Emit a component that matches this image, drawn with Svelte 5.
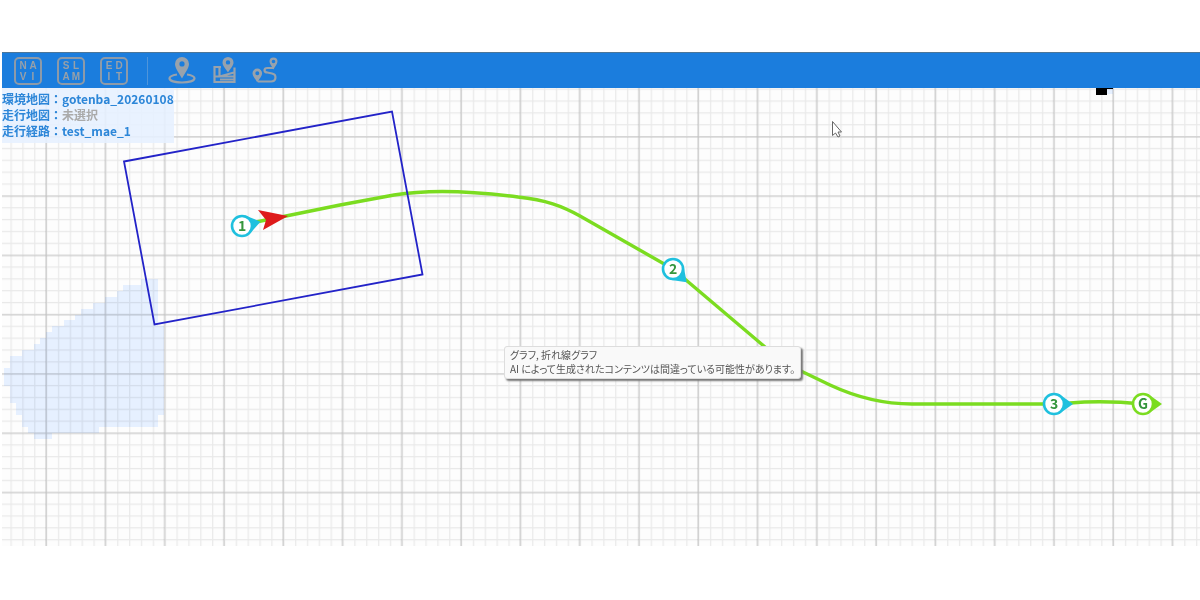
<script lang="ts">
	type Mode = { label: string; letters: string[] };
	type Waypoint = { name: string; x: number; y: number; angle: number; goal?: boolean };

	const modes: Mode[] = [
		{ label: 'NAVI', letters: ['N', 'A', 'V', 'I'] },
		{ label: 'SLAM', letters: ['S', 'L', 'A', 'M'] },
		{ label: 'EDIT', letters: ['E', 'D', 'I', 'T'] }
	];

	const info = [
		{ key: '環境地図', value: 'gotenba_20260108' },
		{ key: '走行地図', value: '' },
		{ key: '走行経路', value: 'test_mae_1' }
	];

	const waypoints: Waypoint[] = [
		{ name: '1', x: 240, y: 138, angle: -13 },
		{ name: '2', x: 671, y: 181, angle: 44 },
		{ name: '3', x: 1052, y: 316, angle: 0 },
		{ name: 'G', x: 1141, y: 316, angle: 0, goal: true }
	];

	// occupancy cells: [first column, end column] for each row
	const cell = 5.928;
	const area = [
		[23, 26], [20, 26], [19, 26], [17, 26], [15, 26], [13, 26], [12, 26], [10, 26], [8, 27],
		[7, 27], [6, 27], [5, 27], [3, 27], [1, 27], [1, 27], [0, 27], [0, 27], [0, 27],
		[1, 27], [1, 27], [1, 27], [2, 27], [2, 27], [3, 26], [3, 26], [4, 16], [5, 8]
	];

	const minor = cell * 2;
	const major = cell * 10;

	let mode = $state('');
</script>

<main>
	<header>
		{#each modes as m (m.label)}
			<button class="mode" aria-label={m.label} aria-pressed={mode === m.label} onclick={() => (mode = m.label)}>
				<svg width="28" height="28" viewBox="0 0 28 28">
					<rect x="1" y="1" width="26" height="26" rx="4" />
					<text x="9" y="12">{m.letters[0]}</text>
					<text x="19" y="12">{m.letters[1]}</text>
					<text x="9" y="23">{m.letters[2]}</text>
					<text x="19" y="23">{m.letters[3]}</text>
				</svg>
			</button>
		{/each}
		<span class="divider"></span>
		<button class="tool" aria-label="Set position">
			<svg width="28" height="28" viewBox="0 0 28 28">
				<path class="line" d="M9 17.500C4.500 18.200 1.500 19.300 1.500 21.300 1.500 24 7 25.500 14 25.500S26.500 24 26.500 21.300C26.500 19.300 23.500 18.200 19 17.500" />
				<path class="fill" fill-rule="evenodd" d="M14 0a7 7 0 0 1 7 7c0 4-4 9-7 14.500C11 16 7 11 7 7a7 7 0 0 1 7-7zm0 4.300a2.600 2.600 0 1 0 0 5.200 2.600 2.600 0 0 0 0-5.200z" />
			</svg>
		</button>
		<button class="tool" aria-label="Map">
			<svg width="28" height="28" viewBox="0 0 28 28">
				<path class="line" d="M11 10H4.500V25H24.500V10.500M9.500 10V19.500M4.500 19.500H24.500M9.500 19.500L24 15.500M10 22.500H24" />
				<path class="fill" fill-rule="evenodd" d="M18 0a5.500 5.500 0 0 1 5.500 5.500c0 3.500-3.500 6.500-5.500 10-2-3.500-5.500-6.500-5.500-10A5.500 5.500 0 0 1 18 0zm0 3.200a2.200 2.200 0 1 0 0 4.400 2.200 2.200 0 0 0 0-4.400z" />
			</svg>
		</button>
		<button class="tool" aria-label="Route">
			<svg width="28" height="28" viewBox="0 0 28 28">
				<path class="line" d="M22 11H15.500C11.500 11 11.500 15.500 15.500 15.500L20 16.500C25 17.500 24.500 24.500 19 24.500H6" />
				<path class="fill" fill-rule="evenodd" d="M5.300 11.500a4.800 4.800 0 0 1 4.800 4.800c0 3-3 5.700-4.800 9.200-1.800-3.500-4.800-6.200-4.800-9.200a4.800 4.800 0 0 1 4.800-4.800zm0 2.800a2 2 0 1 0 0 4 2 2 0 0 0 0-4z" />
				<path class="fill" fill-rule="evenodd" d="M21.500 0.500a4 4 0 0 1 4 4c0 2.500-2.500 4.500-4 8-1.500-3.500-4-5.500-4-8a4 4 0 0 1 4-4zm0 2.200a1.800 1.800 0 1 0 0 3.600 1.800 1.800 0 0 0 0-3.600z" />
			</svg>
		</button>
	</header>

	<section class="map" aria-label="Map view">
		<svg class="canvas" width="100%" height="100%">
			<defs>
				<pattern id="minor" x="44" y="48" width={minor} height={minor} patternUnits="userSpaceOnUse">
					<path d="M0.700 0V{minor}M0 0.700H{minor}" stroke="#ebebeb" stroke-width="1.200" />
				</pattern>
				<pattern id="major" x="43" y="48" width={major} height={major} patternUnits="userSpaceOnUse">
					<path d="M1 0V{major}M0 1H{major}" stroke="#8c8c8c" stroke-opacity=".42" stroke-width="1.200" />
				</pattern>
			</defs>

			<g fill="#e6f0ff" shape-rendering="crispEdges">
				{#each area as [from, to], row (row)}
					<rect x={2.3 + from * cell} y={191 + row * cell} width={(to - from) * cell} height={cell} />
				{/each}
				<rect x="1105" y="0" width="6" height="6" />
			</g>
			<g class="blend">
				<rect width="100%" height="100%" fill="url(#minor)" />
				<rect width="100%" height="100%" fill="url(#major)" />
			</g>
			<path d="M1094 0H1111V1H1105V7H1094z" fill="#000" />

			<path
				class="route"
				d="M254 134L284 128 338 117 392 107Q440 99 516 109C544 112 560 118 578 128L671 181 763 259C780 273 790 279 801 284L828 297C858 311 886 316 910 316H1052L1068 315Q1101 312 1141 316"
			/>
			<path class="footprint" d="M122 73.500L390 23.500 420.500 186.500 152.500 236.500z" />

			{#each waypoints as p (p.name)}
				<g class="waypoint" class:goal={p.goal} transform="translate({p.x} {p.y})">
					<path d="M5 -10L19 0 5 10z" transform="rotate({p.angle})" />
					<circle r="10" />
					<text y="5">{p.name}</text>
				</g>
			{/each}
			<path d="M256 122L286 128 261 142 264 132z" fill="#de1b1b" />

			<path class="cursor" d="M830.500 33.500V47.500L833.500 45 836 49 838 48 836 44H839.500z" />
		</svg>

		<dl class="info">
			{#each info as row (row.key)}
				<div>
					<dt>{row.key}：</dt>
					<dd class:empty={!row.value}>{row.value || '未選択'}</dd>
				</div>
			{/each}
		</dl>

		<div class="tooltip" role="tooltip">
			<div>グラフ, 折れ線グラフ</div>
			<div>AI によって生成されたコンテンツは間違っている可能性があります。</div>
		</div>
	</section>
</main>

<style>
	:global(body) {
		margin: 0;
		background: #fff;
	}
	main {
		padding: 52px 0 0 2px;
		font-family: 'Noto Sans CJK JP', sans-serif;
	}
	header {
		display: flex;
		align-items: center;
		box-sizing: border-box;
		height: 36px;
		padding: 0 12px;
		background: #1b7ddd;
		border-top: 1px solid #4c7699;
	}
	button {
		display: block;
		padding: 0;
		border: 0;
		background: none;
		cursor: pointer;
	}
	button svg {
		display: block;
	}
	.mode {
		margin-right: 15px;
	}
	.mode rect {
		fill: none;
		stroke: #8d9aa8;
		stroke-width: 2;
	}
	.mode text {
		fill: #97a0a9;
		font: bold 10px 'Liberation Sans', sans-serif;
		text-anchor: middle;
	}
	.divider {
		width: 1px;
		height: 28px;
		margin: 0 20px 0 4px;
		background: #4f95da;
	}
	.tool {
		margin-right: 14px;
	}
	.line {
		fill: none;
		stroke: #98a2ac;
		stroke-width: 2.2;
	}
	.fill {
		fill: #98a2ac;
	}
	.map {
		position: relative;
		height: 458px;
		overflow: hidden;
		background: #fdfdfd;
	}
	.canvas {
		display: block;
	}
	.blend {
		mix-blend-mode: multiply;
	}
	.route {
		fill: none;
		stroke: #7bdc20;
		stroke-width: 3.4;
		stroke-linejoin: round;
	}
	.footprint {
		fill: none;
		stroke: #2323c8;
		stroke-width: 1.8;
	}
	.waypoint path {
		fill: #1fc0de;
	}
	.waypoint circle {
		fill: #fff;
		stroke: #1fc0de;
		stroke-width: 2.6;
	}
	.waypoint.goal path {
		fill: #7bdc20;
	}
	.waypoint.goal circle {
		stroke: #7bdc20;
	}
	.waypoint text {
		fill: #35963d;
		font: bold 14px 'Noto Sans CJK JP', sans-serif;
		text-anchor: middle;
	}
	.cursor {
		fill: #fff;
		stroke: #666;
	}
	.info {
		position: absolute;
		top: 0;
		left: 0;
		margin: 0;
		padding: 3px 0 4px;
		background: rgba(230, 240, 255, 0.88);
		color: #2c86d8;
		font-size: 12px;
		font-weight: bold;
		line-height: 16px;
	}
	.info div {
		display: flex;
	}
	dd {
		margin: 0;
	}
	.empty {
		color: #aaa;
	}
	.tooltip {
		position: absolute;
		top: 258px;
		left: 502px;
		padding: 1px 5px 2px;
		border: 1px solid #ddd;
		border-radius: 3px;
		background: #f9f9f9;
		box-shadow: 2px 2px 2px #777;
		color: #555;
		font-size: 10px;
		font-feature-settings: 'palt';
		line-height: 14px;
		white-space: nowrap;
	}
</style>
